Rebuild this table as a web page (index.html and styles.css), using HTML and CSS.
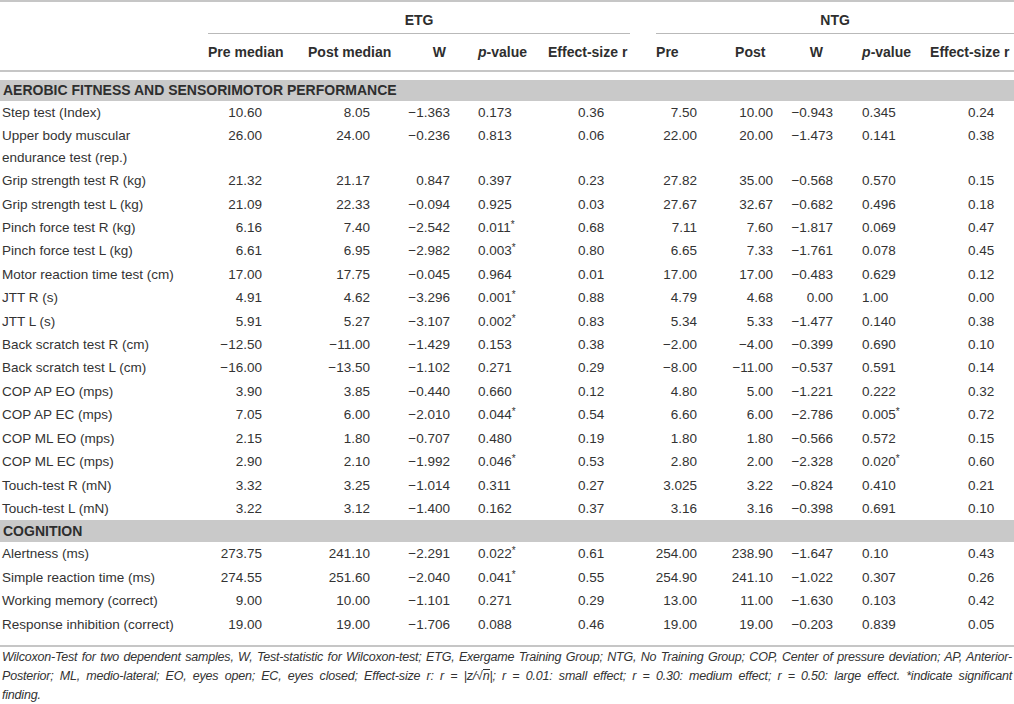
FILE: index.html
```html
<!DOCTYPE html>
<html lang="en">
<head>
<meta charset="utf-8">
<title>Wilcoxon table</title>
<link rel="stylesheet" href="styles.css">
</head>
<body>
<table class="tbl">
  <colgroup>
    <col class="c-label"><col class="c-premed"><col class="c-postmed"><col class="c-w1"><col class="c-p1"><col class="c-r1">
    <col class="c-pre"><col class="c-post"><col class="c-w2"><col class="c-p2"><col class="c-r2">
  </colgroup>
  <thead>
    <tr class="grp">
      <th></th>
      <th colspan="5" class="etg"><div class="line">ETG</div></th>
      <th colspan="5" class="ntg"><div class="line">NTG</div></th>
    </tr>
    <tr class="sub">
      <th></th>
      <th>Pre median</th>
      <th>Post median</th>
      <th>W</th>
      <th><i>p</i>-value</th>
      <th>Effect-size r</th>
      <th>Pre</th>
      <th>Post</th>
      <th>W</th>
      <th><i>p</i>-value</th>
      <th>Effect-size r</th>
    </tr>
  </thead>
  <tbody>
    <tr class="band"><td colspan="11">AEROBIC FITNESS AND SENSORIMOTOR PERFORMANCE</td></tr>
    <tr class="row"><td>Step test (Index)</td><td>10.60</td><td>8.05</td><td>−1.363</td><td>0.173</td><td>0.36</td><td>7.50</td><td>10.00</td><td>−0.943</td><td>0.345</td><td>0.24</td></tr>
    <tr class="row"><td>Upper body muscular<br>endurance test (rep.)</td><td>26.00</td><td>24.00</td><td>−0.236</td><td>0.813</td><td>0.06</td><td>22.00</td><td>20.00</td><td>−1.473</td><td>0.141</td><td>0.38</td></tr>
    <tr class="row"><td>Grip strength test R (kg)</td><td>21.32</td><td>21.17</td><td>0.847</td><td>0.397</td><td>0.23</td><td>27.82</td><td>35.00</td><td>−0.568</td><td>0.570</td><td>0.15</td></tr>
    <tr class="row"><td>Grip strength test L (kg)</td><td>21.09</td><td>22.33</td><td>−0.094</td><td>0.925</td><td>0.03</td><td>27.67</td><td>32.67</td><td>−0.682</td><td>0.496</td><td>0.18</td></tr>
    <tr class="row"><td>Pinch force test R (kg)</td><td>6.16</td><td>7.40</td><td>−2.542</td><td>0.011<sup class="ast">*</sup></td><td>0.68</td><td>7.11</td><td>7.60</td><td>−1.817</td><td>0.069</td><td>0.47</td></tr>
    <tr class="row"><td>Pinch force test L (kg)</td><td>6.61</td><td>6.95</td><td>−2.982</td><td>0.003<sup class="ast">*</sup></td><td>0.80</td><td>6.65</td><td>7.33</td><td>−1.761</td><td>0.078</td><td>0.45</td></tr>
    <tr class="row"><td>Motor reaction time test (cm)</td><td>17.00</td><td>17.75</td><td>−0.045</td><td>0.964</td><td>0.01</td><td>17.00</td><td>17.00</td><td>−0.483</td><td>0.629</td><td>0.12</td></tr>
    <tr class="row"><td>JTT R (s)</td><td>4.91</td><td>4.62</td><td>−3.296</td><td>0.001<sup class="ast">*</sup></td><td>0.88</td><td>4.79</td><td>4.68</td><td>0.00</td><td>1.00</td><td>0.00</td></tr>
    <tr class="row"><td>JTT L (s)</td><td>5.91</td><td>5.27</td><td>−3.107</td><td>0.002<sup class="ast">*</sup></td><td>0.83</td><td>5.34</td><td>5.33</td><td>−1.477</td><td>0.140</td><td>0.38</td></tr>
    <tr class="row"><td>Back scratch test R (cm)</td><td>−12.50</td><td>−11.00</td><td>−1.429</td><td>0.153</td><td>0.38</td><td>−2.00</td><td>−4.00</td><td>−0.399</td><td>0.690</td><td>0.10</td></tr>
    <tr class="row"><td>Back scratch test L (cm)</td><td>−16.00</td><td>−13.50</td><td>−1.102</td><td>0.271</td><td>0.29</td><td>−8.00</td><td>−11.00</td><td>−0.537</td><td>0.591</td><td>0.14</td></tr>
    <tr class="row"><td>COP AP EO (mps)</td><td>3.90</td><td>3.85</td><td>−0.440</td><td>0.660</td><td>0.12</td><td>4.80</td><td>5.00</td><td>−1.221</td><td>0.222</td><td>0.32</td></tr>
    <tr class="row"><td>COP AP EC (mps)</td><td>7.05</td><td>6.00</td><td>−2.010</td><td>0.044<sup class="ast">*</sup></td><td>0.54</td><td>6.60</td><td>6.00</td><td>−2.786</td><td>0.005<sup class="ast">*</sup></td><td>0.72</td></tr>
    <tr class="row"><td>COP ML EO (mps)</td><td>2.15</td><td>1.80</td><td>−0.707</td><td>0.480</td><td>0.19</td><td>1.80</td><td>1.80</td><td>−0.566</td><td>0.572</td><td>0.15</td></tr>
    <tr class="row"><td>COP ML EC (mps)</td><td>2.90</td><td>2.10</td><td>−1.992</td><td>0.046<sup class="ast">*</sup></td><td>0.53</td><td>2.80</td><td>2.00</td><td>−2.328</td><td>0.020<sup class="ast">*</sup></td><td>0.60</td></tr>
    <tr class="row"><td>Touch-test R (mN)</td><td>3.32</td><td>3.25</td><td>−1.014</td><td>0.311</td><td>0.27</td><td>3.025</td><td>3.22</td><td>−0.824</td><td>0.410</td><td>0.21</td></tr>
    <tr class="row"><td>Touch-test L (mN)</td><td>3.22</td><td>3.12</td><td>−1.400</td><td>0.162</td><td>0.37</td><td>3.16</td><td>3.16</td><td>−0.398</td><td>0.691</td><td>0.10</td></tr>
    <tr class="band band2"><td colspan="11">COGNITION</td></tr>
    <tr class="row"><td>Alertness (ms)</td><td>273.75</td><td>241.10</td><td>−2.291</td><td>0.022<sup class="ast">*</sup></td><td>0.61</td><td>254.00</td><td>238.90</td><td>−1.647</td><td>0.10</td><td>0.43</td></tr>
    <tr class="row"><td>Simple reaction time (ms)</td><td>274.55</td><td>251.60</td><td>−2.040</td><td>0.041<sup class="ast">*</sup></td><td>0.55</td><td>254.90</td><td>241.10</td><td>−1.022</td><td>0.307</td><td>0.26</td></tr>
    <tr class="row"><td>Working memory (correct)</td><td>9.00</td><td>10.00</td><td>−1.101</td><td>0.271</td><td>0.29</td><td>13.00</td><td>11.00</td><td>−1.630</td><td>0.103</td><td>0.42</td></tr>
    <tr class="row"><td>Response inhibition (correct)</td><td>19.00</td><td>19.00</td><td>−1.706</td><td>0.088</td><td>0.46</td><td>19.00</td><td>19.00</td><td>−0.203</td><td>0.839</td><td>0.05</td></tr>
  </tbody>
</table>
<div class="note">
  <span class="ln">Wilcoxon-Test for two dependent samples, W, Test-statistic for Wilcoxon-test; ETG, Exergame Training Group; NTG, No Training Group; COP, Center of pressure deviation; AP, Anterior-</span>
  <span class="ln">Posterior; ML, medio-lateral; EO, eyes open; EC, eyes closed; Effect-size r: r = |z/√<span class="ov">n</span>|; r = 0.01: small effect; r = 0.30: medium effect; r = 0.50: large effect. *indicate significant</span>
  <span class="last">finding.</span>
</div>
</body>
</html>
```

FILE: styles.css
```css
html, body {
  margin: 0;
  padding: 0;
  background: #ffffff;
}

body {
  color: #333333;
  font-family: "Liberation Sans", Arial, sans-serif;
  width: 1014px;
}

.tbl {
  width: 1014px;
  border-collapse: separate;
  border-spacing: 0;
  table-layout: fixed;
  border-top: 2px solid #c6c6c6;
  font-size: 13.5px;
}

.c-label { width: 208px; }
.c-premed { width: 92px; }
.c-postmed { width: 95px; }
.c-w1 { width: 75px; }
.c-p1 { width: 78px; }
.c-r1 { width: 95px; }
.c-pre { width: 72px; }
.c-post { width: 75px; }
.c-w2 { width: 60px; }
.c-p2 { width: 80px; }
.c-r2 { width: 84px; }

th {
  font-weight: bold;
  font-size: 14px;
  white-space: nowrap;
  color: #2e2e2e;
}

.grp th {
  padding: 0;
}

.grp .line {
  padding: 8px 0 3px;
  line-height: 20px;
  border-bottom: 1px solid #b9b9b9;
  text-align: center;
}

.etg .line { margin-right: 13px; }
.ntg .line { margin-left: 13px; }

.sub th {
  padding: 8px 0;
  line-height: 20px;
  border-bottom: 2px solid #c6c6c6;
  text-align: left;
}

.sub th:nth-child(3) { padding-left: 8px; }
.sub th:nth-child(4) { text-align: right; padding-right: 24px; }
.sub th:nth-child(5) { padding-left: 8px; }
.sub th:nth-child(7) { padding-left: 13px; }
.sub th:nth-child(8) { padding-left: 20px; }
.sub th:nth-child(9) { text-align: right; padding-right: 27px; }
.sub th:nth-child(10) { padding-left: 12px; }

.band td {
  border-top: 8px solid #ffffff;
  background: #c9c9c9;
  background-clip: padding-box;
  padding: 0 3px;
  line-height: 21px;
  font-weight: bold;
  font-size: 14px;
  color: #2e2e2e;
}

.band2 td {
  border-top: 0;
  line-height: 22px;
}

.row td {
  padding: 1px 0;
  line-height: 21.4px;
  vertical-align: top;
  white-space: nowrap;
}

.row td:nth-child(1) { padding-left: 2px; }
.row td:nth-child(2) { text-align: right; padding-right: 38px; }
.row td:nth-child(3) { text-align: right; padding-right: 25px; }
.row td:nth-child(4) { text-align: right; padding-right: 20px; }
.row td:nth-child(5) { padding-left: 8px; }
.row td:nth-child(6) { padding-left: 30px; }
.row td:nth-child(7) { text-align: right; padding-right: 18px; }
.row td:nth-child(8) { text-align: right; padding-right: 17px; }
.row td:nth-child(9) { text-align: right; padding-right: 17px; }
.row td:nth-child(10) { padding-left: 12px; }
.row td:nth-child(11) { padding-left: 38px; }

.ast {
  font-size: 10px;
  line-height: 0;
  vertical-align: 4px;
}

.note {
  margin-top: 9px;
  border-top: 2px solid #c6c6c6;
  padding: 1px 2px 0;
  font-style: italic;
  font-size: 12.5px;
  letter-spacing: -0.2px;
  line-height: 19px;
  color: #333333;
}

.note .ln {
  display: block;
  text-align: justify;
  text-align-last: justify;
}

.note .last {
  display: block;
}

.ov {
  border-top: 1px solid #333333;
  line-height: 12px;
  display: inline-block;
}
```
